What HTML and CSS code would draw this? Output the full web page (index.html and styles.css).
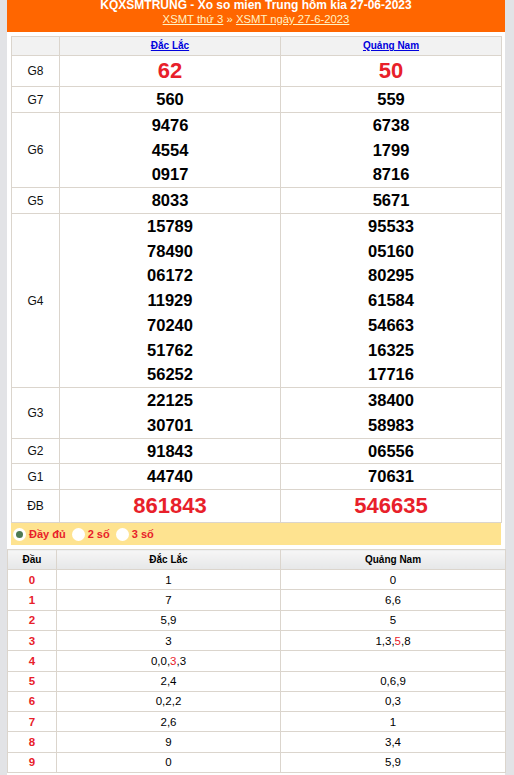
FILE: index.html
```html
<!DOCTYPE html>
<html lang="vi">
<head>
<meta charset="utf-8">
<title>KQXSMTRUNG</title>
<link rel="stylesheet" href="styles.css">
</head>
<body>
<div class="page">
  <div class="box">
    <div class="head">
      <h2 class="title">KQXSMTRUNG - Xo so mien Trung hôm kia 27-06-2023</h2>
      <div class="sub"><a href="#">XSMT thứ 3</a> » <a href="#">XSMT ngày 27-6-2023</a></div>
    </div>
    <div class="inner">
      <table class="kq">
        <colgroup><col class="c1"><col class="c2"><col class="c3"></colgroup>
        <tr class="hrow"><th></th><th><a href="#">Đắc Lắc</a></th><th><a href="#">Quảng Nam</a></th></tr>
        <tr class="g8"><td class="lb">G8</td><td><div class="big">62</div></td><td><div class="big">50</div></td></tr>
        <tr><td class="lb">G7</td><td><div>560</div></td><td><div>559</div></td></tr>
        <tr class="g6"><td class="lb">G6</td><td><div>9476</div><div>4554</div><div>0917</div></td><td><div>6738</div><div>1799</div><div>8716</div></td></tr>
        <tr><td class="lb">G5</td><td><div>8033</div></td><td><div>5671</div></td></tr>
        <tr class="g4"><td class="lb">G4</td><td><div>15789</div><div>78490</div><div>06172</div><div>11929</div><div>70240</div><div>51762</div><div>56252</div></td><td><div>95533</div><div>05160</div><div>80295</div><div>61584</div><div>54663</div><div>16325</div><div>17716</div></td></tr>
        <tr><td class="lb">G3</td><td><div>22125</div><div>30701</div></td><td><div>38400</div><div>58983</div></td></tr>
        <tr class="g2"><td class="lb">G2</td><td><div>91843</div></td><td><div>06556</div></td></tr>
        <tr><td class="lb">G1</td><td><div>44740</div></td><td><div>70631</div></td></tr>
        <tr class="db"><td class="lb">ĐB</td><td><div class="big">861843</div></td><td><div class="big">546635</div></td></tr>
      </table>
      <div class="opts">
        <span class="radio on"></span><span class="opt">Đầy đủ</span>
        <span class="radio"></span><span class="opt">2 số</span>
        <span class="radio"></span><span class="opt">3 số</span>
      </div>
    </div>
    <table class="loto">
      <colgroup><col class="l1"><col class="l2"><col class="l3"></colgroup>
      <tr class="lh"><th>Đầu</th><th>Đắc Lắc</th><th>Quảng Nam</th></tr>
      <tr><td class="dau">0</td><td>1</td><td>0</td></tr>
      <tr><td class="dau">1</td><td>7</td><td>6,6</td></tr>
      <tr><td class="dau">2</td><td>5,9</td><td>5</td></tr>
      <tr><td class="dau">3</td><td>3</td><td>1,3,<span class="r">5</span>,8</td></tr>
      <tr><td class="dau">4</td><td>0,0,<span class="r">3</span>,3</td><td></td></tr>
      <tr><td class="dau">5</td><td>2,4</td><td>0,6,9</td></tr>
      <tr><td class="dau">6</td><td>0,2,2</td><td>0,3</td></tr>
      <tr><td class="dau">7</td><td>2,6</td><td>1</td></tr>
      <tr><td class="dau">8</td><td>9</td><td>3,4</td></tr>
      <tr><td class="dau">9</td><td>0</td><td>5,9</td></tr>
    </table>
  </div>
</div>
</body>
</html>
```
FILE: styles.css
```css
html, body {
  margin: 0;
  padding: 0;
  background: #e2e3e6;
  font-family: "Liberation Sans", Arial, sans-serif;
  color: #000;
}
.page {
  padding-left: 7px;
}
.box {
  width: 498px;
  background: #fff;
  min-height: 775px;
}
.head {
  background: #ff6600;
  height: 32px;
  text-align: center;
  overflow: hidden;
}
.title {
  margin: 0;
  font-size: 12px;
  line-height: 11px;
  font-weight: bold;
  color: #fff;
}
.sub {
  font-size: 11.3px;
  line-height: 12px;
  margin-top: 2px;
  color: #fff3c4;
}
.sub a {
  color: #fff3c4;
  text-decoration: underline;
}
.inner {
  padding: 4px 4px 0 4px;
}
table {
  border-collapse: collapse;
  table-layout: fixed;
}
.kq {
  width: 490px;
}
.c1 { width: 48px; }
.c2 { width: 221px; }
.c3 { width: 221px; }
.kq th, .kq td {
  border: 1px solid #dbd5cd;
  padding: 0;
  text-align: center;
}
.kq th {
  background: #f2f2f2;
  height: 18px;
  line-height: 18px;
  font-size: 10px;
}
.kq th a {
  color: #0000dd;
  text-decoration: underline;
  font-weight: bold;
}
.kq td.lb {
  font-size: 12px;
  font-weight: normal;
  color: #111;
}
.kq td div {
  font-size: 16.5px;
  font-weight: bold;
  line-height: 25px;
}
.kq .g6 td div {
  line-height: 24.667px;
}
.kq .g4 td div {
  line-height: 24.714px;
}
.kq .g2 td div {
  line-height: 24px;
}
.kq td div.big {
  font-size: 22px;
  color: #e8202a;
}
.kq .g8 td div {
  line-height: 30px;
}
.kq .db td div {
  line-height: 32px;
}
.opts {
  background: #fee390;
  height: 22px;
  display: flex;
  align-items: center;
  padding-left: 2px;
}
.radio {
  width: 13px;
  height: 13px;
  border-radius: 50%;
  background: #fff;
  box-sizing: border-box;
  display: flex;
  align-items: center;
  justify-content: center;
  flex: none;
}
.radio.on::after {
  content: "";
  width: 7px;
  height: 7px;
  border-radius: 50%;
  background: #4e7a52;
}
.opt {
  color: #e8202a;
  font-size: 11px;
  font-weight: bold;
  margin-left: 3px;
  margin-right: 6px;
}
.loto {
  width: 498px;
  margin-top: 4px;
}
.l1 { width: 49px; }
.l2 { width: 224px; }
.l3 { width: 225px; }
.loto th, .loto td {
  border: 1px solid #dbd5cd;
  padding: 0;
  text-align: center;
}
.loto th {
  background: linear-gradient(#f6f6f6, #e6e7e8);
  height: 19px;
  font-size: 10px;
  font-weight: bold;
}
.loto td {
  height: 19.3px;
  font-size: 11.5px;
  line-height: 14px;
}
.loto td.dau {
  color: #e8202a;
  font-weight: bold;
}
.loto .r {
  color: #e8202a;
}
```
